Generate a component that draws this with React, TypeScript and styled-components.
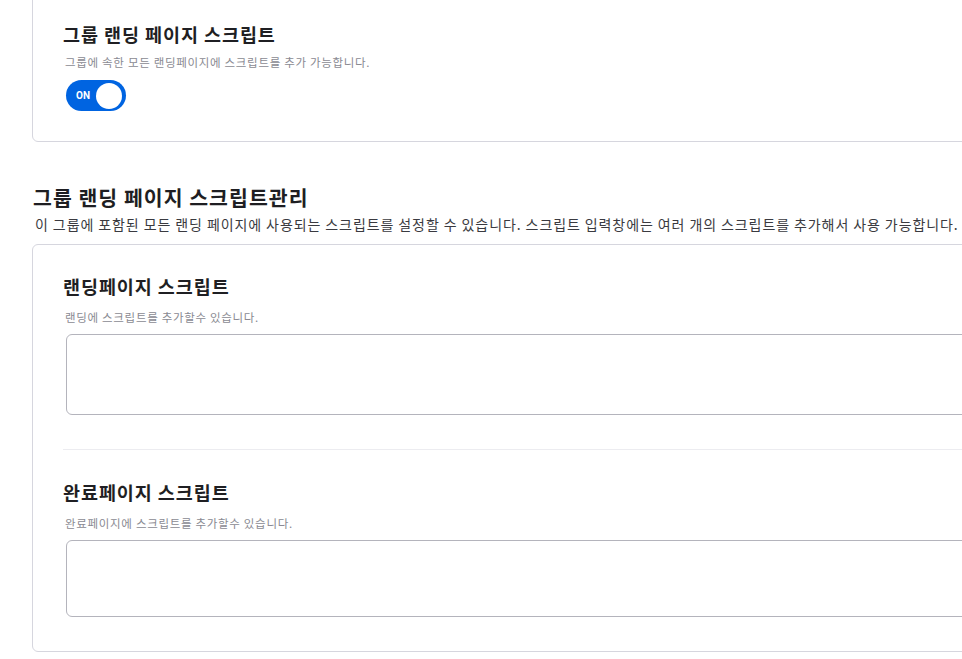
import React, { useState } from 'react'
import styled, { createGlobalStyle } from 'styled-components'

const GlobalStyle = createGlobalStyle`
  html, body {
    margin: 0;
    padding: 0;
    background: #ffffff;
    overflow: hidden;
  }
  body {
    font-family: 'Noto Sans CJK KR', 'Noto Sans', sans-serif;
    color: #222222;
  }
`

function Toggle({ on, onChange }: { on: boolean; onChange: (v: boolean) => void }) {
  return (
    <Switch $on={on} onClick={() => onChange(!on)} type="button">
      <SwitchLabel>{on ? 'ON' : 'OFF'}</SwitchLabel>
      <Knob $on={on} />
    </Switch>
  )
}

function ScriptField({
  title,
  desc,
  height,
}: {
  title: string
  desc: string
  height: number
}) {
  const [value, setValue] = useState('')
  return (
    <Field>
      <FieldTitle>{title}</FieldTitle>
      <FieldDesc>{desc}</FieldDesc>
      <ScriptInput
        $height={height}
        value={value}
        onChange={(e) => setValue(e.target.value)}
      />
    </Field>
  )
}

export default function App() {
  const [enabled, setEnabled] = useState(true)

  return (
    <Page>
      <GlobalStyle />
      <TopCard>
        <CardTitle>그룹 랜딩 페이지 스크립트</CardTitle>
        <CardDesc>그룹에 속한 모든 랜딩페이지에 스크립트를 추가 가능합니다.</CardDesc>
        <Toggle on={enabled} onChange={setEnabled} />
      </TopCard>

      <SectionHead>
        <SectionTitle>그룹 랜딩 페이지 스크립트관리</SectionTitle>
        <SectionDesc>
          이 그룹에 포함된 모든 랜딩 페이지에 사용되는 스크립트를 설정할 수 있습니다. 스크립트
          입력창에는 여러 개의 스크립트를 추가해서 사용 가능합니다.
        </SectionDesc>
      </SectionHead>

      <ScriptCard>
        <ScriptField
          title="랜딩페이지 스크립트"
          desc="랜딩에 스크립트를 추가할수 있습니다."
          height={81}
        />
        <Divider />
        <ScriptField
          title="완료페이지 스크립트"
          desc="완료페이지에 스크립트를 추가할수 있습니다."
          height={77}
        />
      </ScriptCard>
    </Page>
  )
}

const Page = styled.div`
  width: 1120px;
  padding: 0 0 40px 32px;
  display: flex;
  flex-direction: column;
`

const Card = styled.section`
  border: 1px solid #d6d6de;
  border-radius: 6px;
  background: #ffffff;
`

const TopCard = styled(Card)`
  margin-top: -8px;
  padding: 28px 30px 30px 30px;
  display: flex;
  flex-direction: column;
  align-items: flex-start;
`

const CardTitle = styled.h3`
  margin: 0;
  font-size: 18.5px;
  line-height: 26px;
  font-weight: 700;
  letter-spacing: 0.05em;
  color: #1f1f23;
`

const CardDesc = styled.p`
  margin: 7px 0 10px 2px;
  font-size: 11.5px;
  line-height: 16px;
  letter-spacing: 0.06em;
  color: #8a8a92;
`

const Switch = styled.button<{ $on: boolean }>`
  position: relative;
  width: 60px;
  height: 31px;
  margin-left: 3px;
  padding: 0 0 0 10px;
  border: none;
  border-radius: 16px;
  background: ${({ $on }) => ($on ? '#0064e1' : '#c4c4cc')};
  display: flex;
  align-items: center;
  cursor: pointer;
`

const SwitchLabel = styled.span`
  font-family: 'Roboto', 'Noto Sans', sans-serif;
  font-size: 10px;
  font-weight: 700;
  color: #ffffff;
  letter-spacing: 0.2px;
`

const Knob = styled.span<{ $on: boolean }>`
  position: absolute;
  top: 2.5px;
  left: ${({ $on }) => ($on ? '30px' : '4px')};
  width: 26px;
  height: 26px;
  border-radius: 50%;
  background: #ffffff;
`

const SectionHead = styled.div`
  margin-top: 41px;
  display: flex;
  flex-direction: column;
`

const SectionTitle = styled.h2`
  margin: 0 0 0 1px;
  font-size: 20.5px;
  line-height: 28px;
  font-weight: 700;
  letter-spacing: 0.05em;
  color: #1e1e22;
`

const SectionDesc = styled.p`
  margin: 3px 0 0 3px;
  font-size: 14px;
  line-height: 20px;
  letter-spacing: 0.065em;
  color: #3a3a40;
  white-space: nowrap;
`

const ScriptCard = styled(Card)`
  margin-top: 10px;
  padding: 28px 30px 34px 30px;
  display: flex;
  flex-direction: column;
`

const Field = styled.div`
  display: flex;
  flex-direction: column;
`

const FieldTitle = styled(CardTitle)``

const FieldDesc = styled(CardDesc)`
  margin: 10px 0 9px 2px;
`

const ScriptInput = styled.textarea<{ $height: number }>`
  margin-left: 3px;
  height: ${({ $height }) => $height}px;
  box-sizing: border-box;
  border: 1px solid #b4b4bc;
  border-radius: 6px;
  padding: 10px 12px;
  font-family: 'Liberation Mono', monospace;
  font-size: 13px;
  resize: none;
  outline: none;
`

const Divider = styled.hr`
  margin: 34px 0 29px 0;
  border: none;
  border-top: 1px solid #ececf0;
`
